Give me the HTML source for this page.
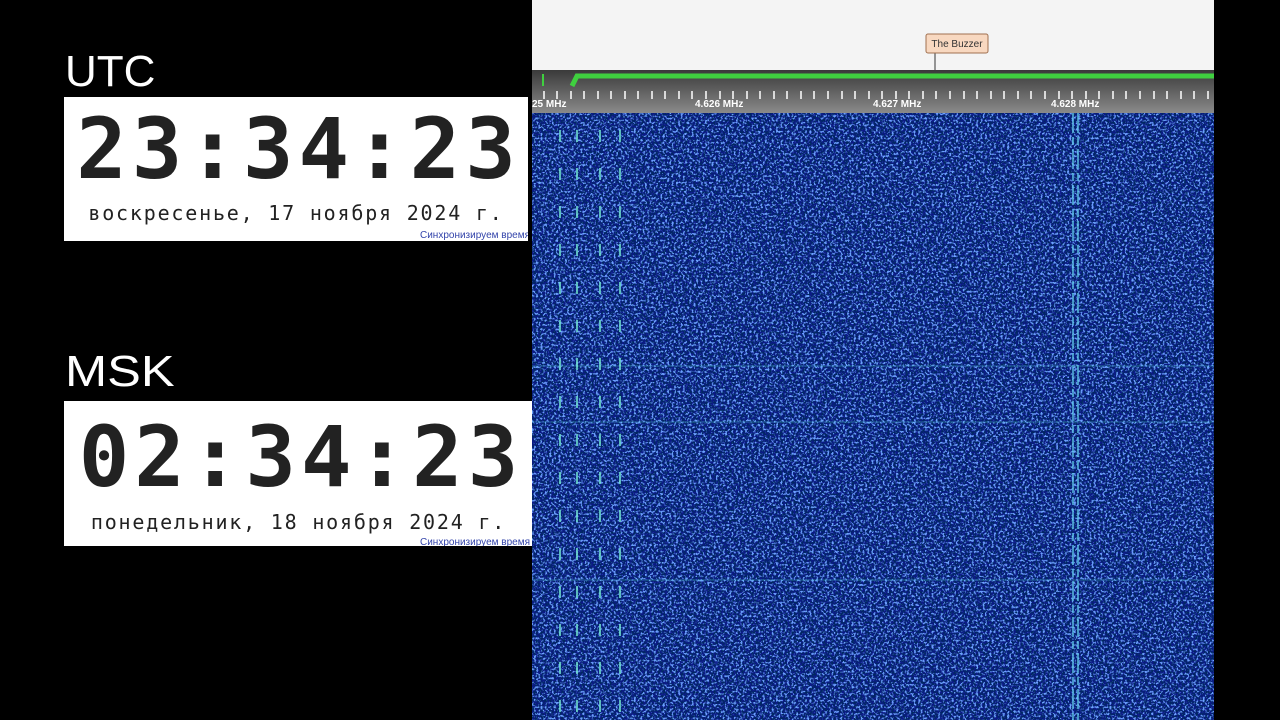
<!DOCTYPE html>
<html><head><meta charset="utf-8"><style>
body{margin:0;width:1280px;height:720px;background:#000;position:relative;overflow:hidden;font-family:"Liberation Sans",sans-serif}
.lbl{position:absolute;left:65px;color:#fff;font-size:44px;line-height:1;transform-origin:left}
.box{position:absolute;left:64px;background:#fff;overflow:hidden}
.t{position:absolute;left:0;width:100%;text-align:center;font-family:"DejaVu Sans Mono","Liberation Mono",monospace;font-weight:bold;font-size:84px;color:#222;line-height:1;letter-spacing:5px;text-indent:5px}
.d{position:absolute;left:0;width:100%;text-align:center;font-family:"DejaVu Sans Mono","Liberation Mono",monospace;font-size:20px;color:#222;letter-spacing:1.8px}
.s{position:absolute;left:356px;font-size:10px;color:#3344aa;white-space:nowrap}
</style></head><body>
<div class="lbl" style="top:50px">UTC</div>
<div class="box" style="top:97px;width:464px;height:144px">
<div class="t" style="top:10px">23:34:23</div>
<div class="d" style="top:104px">воскресенье, 17 ноября 2024 г.</div>
<div class="s" style="top:133px">Синхронизируем время</div>
</div>
<div class="lbl" style="top:350px;transform:scaleX(1.15)">MSK</div>
<div class="box" style="top:401px;width:469px;height:145px">
<div class="t" style="top:14px">02:34:23</div>
<div class="d" style="top:109px">понедельник, 18 ноября 2024 г.</div>
<div class="s" style="top:136px">Синхронизируем время</div>
</div>
<svg style="position:absolute;left:532px;top:0" width="682" height="720">
<defs>
<filter id="n" x="0" y="0" width="100%" height="100%"><feTurbulence type="fractalNoise" baseFrequency="0.45" numOctaves="3" seed="3"/><feColorMatrix type="matrix" values="0 0 0 0 0.15  0 0 0 0 0.35  0 0 0 0 1  0 0 0 6 -3.1"/></filter>
<filter id="m" x="0" y="0" width="100%" height="100%"><feTurbulence type="fractalNoise" baseFrequency="0.5" numOctaves="2" seed="9"/><feColorMatrix type="matrix" values="0 0 0 0 0  0 0 0 0 0.02  0 0 0 0 0.12  0 0 0 6 -2.5"/></filter>
<linearGradient id="g" x1="0" y1="0" x2="0" y2="1"><stop offset="0" stop-color="#3a3a3a"/><stop offset="1" stop-color="#8a8a8a"/></linearGradient>
</defs>
<rect width="682" height="70" fill="#f4f4f4"/>
<rect y="70" width="682" height="43" fill="url(#g)"/>
<path d="M40 86 L45 76 L682 76" stroke="#3fd03f" stroke-width="5" fill="none"/>
<rect x="10" y="74" width="2" height="12" fill="#3fd03f"/>
<line x1="403" y1="52" x2="403" y2="70" stroke="#333"/>
<rect x="394" y="34" width="62" height="19" rx="2" fill="#f8d8c0" stroke="#a07050"/>
<text x="425" y="47" font-size="10" text-anchor="middle" fill="#333" font-family="Liberation Sans">The Buzzer</text>
<g stroke="#fff" stroke-width="1.5">
<path d="M12 91v8M25 91v8M39 91v8M52 91v8M66 91v8M79 91v8M93 91v8M106 91v8M120 91v8M133 91v8M147 91v8M160 91v8M174 91v8M188 91v8M201 91v8M215 91v8M228 91v8M242 91v8M255 91v8M269 91v8M282 91v8M296 91v8M310 91v8M323 91v8M337 91v8M350 91v8M364 91v8M377 91v8M391 91v8M404 91v8M418 91v8M432 91v8M445 91v8M459 91v8M472 91v8M486 91v8M499 91v8M513 91v8M527 91v8M540 91v8M554 91v8M567 91v8M581 91v8M594 91v8M608 91v8M622 91v8M635 91v8M649 91v8M662 91v8M676 91v8"/>
</g>
<g font-size="10" font-weight="bold" fill="#fff" font-family="Liberation Sans">
<text x="0" y="107">25 MHz</text><text x="163" y="107">4.626 MHz</text><text x="341" y="107">4.627 MHz</text><text x="519" y="107">4.628 MHz</text>
</g>
<rect y="113" width="682" height="607" fill="#0c1a88"/>
<rect y="113" width="682" height="607" filter="url(#m)"/>
<rect y="113" width="682" height="607" filter="url(#n)"/>
<g stroke="#5ad0e0" stroke-width="2" opacity="0.7">
<path d="M541 113v607M546 113v607" stroke="#60c8e8" stroke-dasharray="20 4 8 4"/>
<path d="M0 422h682M0 580h682M0 366h682" stroke-width="1" opacity="0.6"/>
</g>
<g stroke="#70e0d0" stroke-width="2" opacity="0.8" stroke-dasharray="12 26">
<path d="M28 130v590M45 130v590M68 130v590M88 130v590"/>
</g>
</svg>
</body></html>
